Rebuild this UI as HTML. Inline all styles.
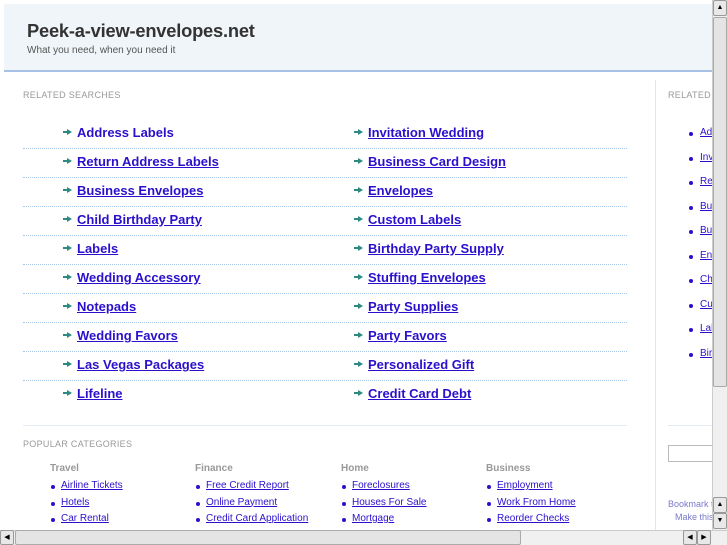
<!DOCTYPE html>
<html><head><meta charset="utf-8"><style>
*{margin:0;padding:0;box-sizing:border-box}
body{width:727px;height:545px;overflow:hidden;background:#fff;font-family:"Liberation Sans",sans-serif;position:relative}
.a{position:absolute}
#hdr{left:4px;top:4px;width:709px;height:68px;background:#eff5f8;border-bottom:2px solid #a8c2e6}
#hdr h1{position:absolute;left:23px;top:16px;font-size:18.3px;color:#333;font-weight:bold;letter-spacing:-0.2px}
#hdr p{position:absolute;left:23px;top:41px;font-size:10px;color:#555}
.lab{font-size:9px;color:#999;letter-spacing:0.3px;white-space:nowrap}
.row{position:absolute;left:23px;width:604px;height:29px;border-bottom:1px dotted #a8c8ea}
.lk{position:absolute;font-size:13px;font-weight:bold;color:#2a10cc;text-decoration:underline;white-space:nowrap}
.ar{position:absolute;width:0;height:0;border-left:5px solid #2e8a80;border-top:3px solid transparent;border-bottom:3px solid transparent}
.ar:before{content:"";position:absolute;left:-9px;top:-1px;width:5px;height:2px;background:#2e8a80}
.sl{position:absolute;font-size:10px;color:#2a10cc;text-decoration:underline;white-space:nowrap}
.b{position:absolute;width:4px;height:4px;border-radius:2px;background:#2a10cc}
.h{position:absolute;font-size:10px;font-weight:bold;color:#999}
#side{position:absolute;left:0;top:0;width:712px;height:530px;overflow:hidden}
</style></head><body>
<div id="hdr" class="a"><h1>Peek-a-view-envelopes.net</h1><p>What you need, when you need it</p></div>
<div class="a lab" style="left:23px;top:90px">RELATED SEARCHES</div>
<div class="a" style="left:655px;top:80px;width:1px;height:450px;background:#dde6f2"></div>

<div class="row" style="top:120px"></div><div class="row" style="top:149px"></div><div class="row" style="top:178px"></div><div class="row" style="top:207px"></div><div class="row" style="top:236px"></div><div class="row" style="top:265px"></div><div class="row" style="top:294px"></div><div class="row" style="top:323px"></div><div class="row" style="top:352px"></div>

<div id="side">
<div class="a lab" style="left:668px;top:90px">RELATED SEARCHES</div>
<div class="a" style="left:668px;top:425px;width:60px;height:1px;background:#e2eaf4"></div>
<div class="a" style="left:668px;top:445px;width:60px;height:17px;border:1px solid #bbb"></div>
<div class="a" style="left:668px;top:499px;font-size:9px;color:#7a7acc;white-space:nowrap">Bookmark this page</div>
<div class="a" style="left:675px;top:512px;font-size:9px;color:#7a7acc;white-space:nowrap">Make this your homepage</div>
<div id="sl"></div>
</div>
<div id="links"></div>
<script>
var L=["Address Labels","Return Address Labels","Business Envelopes","Child Birthday Party","Labels","Wedding Accessory","Notepads","Wedding Favors","Las Vegas Packages","Lifeline"];
var R=["Invitation Wedding","Business Card Design","Envelopes","Custom Labels","Birthday Party Supply","Stuffing Envelopes","Party Supplies","Party Favors","Personalized Gift","Credit Card Debt"];
var h="";
for(var i=0;i<10;i++){var y=125+i*29;
h+='<div class="ar" style="left:67px;top:'+(y+4)+'px"></div><div class="lk" style="left:77px;top:'+y+'px'+(i==0?';text-decoration:none':'')+'">'+L[i]+'</div>';
h+='<div class="ar" style="left:358px;top:'+(y+4)+'px"></div><div class="lk" style="left:368px;top:'+y+'px">'+R[i]+'</div>';}
var S=["Address Labels","Invitation Wedding","Return Address Labels","Business Envelopes","Business Card Design","Envelopes","Child Birthday Party","Custom Labels","Labels","Birthday Party Supply"];
var s="";
for(var i=0;i<10;i++){var y=127+i*24.5;s+='<div class="b" style="left:689px;top:'+(y+5)+'px"></div><div class="sl" style="left:700px;top:'+y+'px">'+S[i]+'</div>';}
document.getElementById("sl").innerHTML=s;
var C=[["Travel",50,["Airline Tickets","Hotels","Car Rental"]],["Finance",195,["Free Credit Report","Online Payment","Credit Card Application"]],["Home",341,["Foreclosures","Houses For Sale","Mortgage"]],["Business",486,["Employment","Work From Home","Reorder Checks"]]];
for(var c=0;c<4;c++){var x=C[c][1];h+='<div class="h" style="left:'+x+'px;top:463px">'+C[c][0]+'</div>';
for(var j=0;j<3;j++){var y=480+j*16.5;h+='<div class="b" style="left:'+(x+1)+'px;top:'+(y+5)+'px"></div><div class="sl" style="left:'+(x+11)+'px;top:'+y+'px">'+C[c][2][j]+'</div>';}}
document.getElementById("links").innerHTML=h;
</script>
<div class="a" style="left:23px;top:425px;width:604px;height:1px;background:#e2eaf4"></div>
<div class="a lab" style="left:23px;top:439px">POPULAR CATEGORIES</div>
<!-- scrollbars -->
<div class="a" style="left:712px;top:0;width:15px;height:530px;background:#f0f0f0;border-left:1px solid #ccc"></div>
<div class="a" style="left:713px;top:0;width:14px;height:16px;background:#e8e8e8;border:1px solid #999;border-radius:2px;font-size:7px;text-align:center;line-height:13px">▲</div>
<div class="a" style="left:713px;top:17px;width:14px;height:370px;background:#e4e4e4;border:1px solid #aaa;border-radius:2px"></div>
<div class="a" style="left:713px;top:497px;width:14px;height:16px;background:#e8e8e8;border:1px solid #999;border-radius:2px;font-size:7px;text-align:center;line-height:13px">▲</div>
<div class="a" style="left:713px;top:513px;width:14px;height:16px;background:#e8e8e8;border:1px solid #999;border-radius:2px;font-size:7px;text-align:center;line-height:13px">▼</div>
<div class="a" style="left:0;top:530px;width:727px;height:15px;background:#f0f0f0;border-top:1px solid #ccc"></div>
<div class="a" style="left:0;top:530px;width:14px;height:15px;background:#e8e8e8;border:1px solid #999;border-radius:2px;font-size:7px;text-align:center;line-height:13px">◀</div>
<div class="a" style="left:15px;top:530px;width:506px;height:15px;background:#e4e4e4;border:1px solid #aaa;border-radius:2px"></div>
<div class="a" style="left:683px;top:530px;width:14px;height:15px;background:#e8e8e8;border:1px solid #999;border-radius:2px;font-size:7px;text-align:center;line-height:13px">◀</div>
<div class="a" style="left:697px;top:530px;width:14px;height:15px;background:#e8e8e8;border:1px solid #999;border-radius:2px;font-size:7px;text-align:center;line-height:13px">▶</div>
</body></html>
